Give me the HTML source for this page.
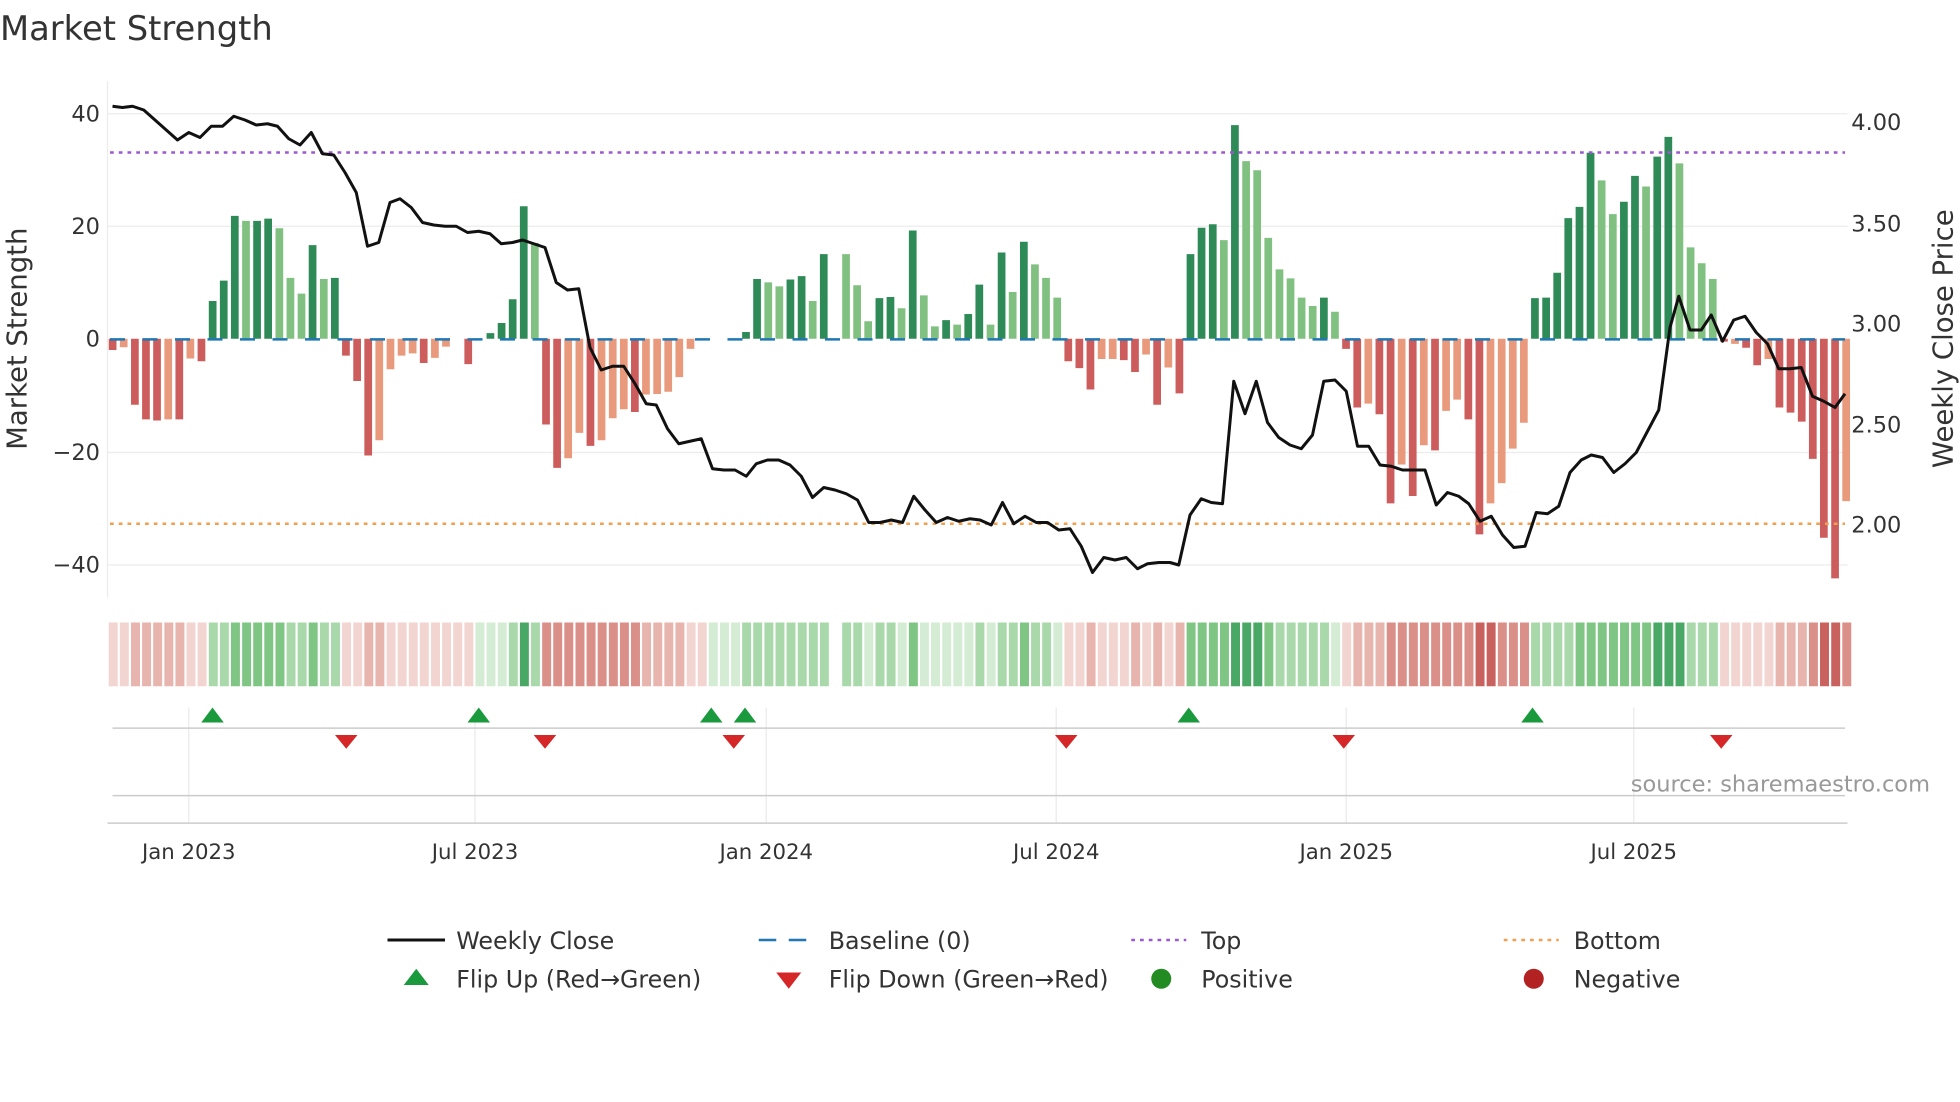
<!DOCTYPE html>
<html><head><meta charset="utf-8"><style>
html,body{margin:0;padding:0;background:#fff;}
svg{display:block;font-family:"DejaVu Sans","Liberation Sans",sans-serif;}
.g{fill:#2e8b57}.l{fill:#80c080}.r{fill:#cd5c5c}.s{fill:#e99a7c}
.a1{fill:#d3ecd3}.a2{fill:#a9d9aa}.a3{fill:#7fc584}.a4{fill:#4aa866}
.b1{fill:#f2d5d1}.b2{fill:#e8b4ae}.b3{fill:#db8f89}.b4{fill:#c9625e}
</style></head><body>
<svg width="1960" height="1102" viewBox="0 0 1568 881.6" xmlns="http://www.w3.org/2000/svg">
<rect width="1568" height="882" fill="#fff"/>
<text x="0" y="32" font-size="27" fill="#333">Market Strength</text>
<g stroke="#ececec" stroke-width="1">
<line x1="86" y1="91" x2="1478" y2="91"/><line x1="86" y1="181" x2="1478" y2="181"/>
<line x1="86" y1="362" x2="1478" y2="362"/><line x1="86" y1="452" x2="1478" y2="452"/>
<line x1="86" y1="65" x2="86" y2="478"/>
</g>
<g font-size="18" fill="#333" text-anchor="end">
<text x="80" y="97">40</text><text x="80" y="187">20</text><text x="80" y="277">0</text>
<text x="80" y="368">−20</text><text x="80" y="458">−40</text>
</g>
<g font-size="18" fill="#333">
<text x="1481" y="104">4.00</text><text x="1481" y="185">3.50</text><text x="1481" y="265">3.00</text>
<text x="1481" y="346">2.50</text><text x="1481" y="426">2.00</text>
</g>
<text transform="translate(21,271) rotate(-90)" font-size="22" fill="#333" text-anchor="middle">Market Strength</text>
<text transform="translate(1562,271) rotate(-90)" font-size="22" fill="#333" text-anchor="middle">Weekly Close Price</text>
<g transform="translate(87,0) scale(0.9955,1) translate(-87,0)">
<rect x="87.0" y="271" width="6.2" height="9.0" class="r"/>
<rect x="95.9" y="271" width="6.2" height="6.8" class="s"/>
<rect x="104.9" y="271" width="6.2" height="52.8" class="r"/>
<rect x="113.8" y="271" width="6.2" height="64.5" class="r"/>
<rect x="122.7" y="271" width="6.2" height="65.4" class="r"/>
<rect x="131.7" y="271" width="6.2" height="64.5" class="s"/>
<rect x="140.6" y="271" width="6.2" height="64.5" class="r"/>
<rect x="149.5" y="271" width="6.2" height="15.8" class="s"/>
<rect x="158.4" y="271" width="6.2" height="18.0" class="r"/>
<rect x="167.4" y="240.8" width="6.2" height="30.2" class="g"/>
<rect x="176.3" y="224.5" width="6.2" height="46.5" class="g"/>
<rect x="185.2" y="172.7" width="6.2" height="98.3" class="g"/>
<rect x="194.2" y="176.7" width="6.2" height="94.3" class="l"/>
<rect x="203.1" y="176.7" width="6.2" height="94.3" class="g"/>
<rect x="212.0" y="174.9" width="6.2" height="96.1" class="g"/>
<rect x="221.0" y="182.6" width="6.2" height="88.4" class="l"/>
<rect x="229.9" y="222.3" width="6.2" height="48.7" class="l"/>
<rect x="238.8" y="234.9" width="6.2" height="36.1" class="l"/>
<rect x="247.7" y="196.1" width="6.2" height="74.9" class="g"/>
<rect x="256.7" y="223.2" width="6.2" height="47.8" class="l"/>
<rect x="265.6" y="222.3" width="6.2" height="48.7" class="g"/>
<rect x="274.5" y="271" width="6.2" height="13.5" class="r"/>
<rect x="283.5" y="271" width="6.2" height="33.8" class="r"/>
<rect x="292.4" y="271" width="6.2" height="93.4" class="r"/>
<rect x="301.3" y="271" width="6.2" height="81.2" class="s"/>
<rect x="310.3" y="271" width="6.2" height="24.4" class="s"/>
<rect x="319.2" y="271" width="6.2" height="13.5" class="s"/>
<rect x="328.1" y="271" width="6.2" height="11.7" class="s"/>
<rect x="337.0" y="271" width="6.2" height="19.4" class="r"/>
<rect x="346.0" y="271" width="6.2" height="15.3" class="s"/>
<rect x="354.9" y="271" width="6.2" height="6.3" class="s"/>
<rect x="372.8" y="271" width="6.2" height="20.3" class="r"/>
<rect x="390.6" y="266.5" width="6.2" height="4.5" class="g"/>
<rect x="399.6" y="258.4" width="6.2" height="12.6" class="g"/>
<rect x="408.5" y="239.4" width="6.2" height="31.6" class="g"/>
<rect x="417.4" y="165" width="6.2" height="106" class="g"/>
<rect x="426.3" y="194.3" width="6.2" height="76.7" class="l"/>
<rect x="435.3" y="271" width="6.2" height="68.6" class="r"/>
<rect x="444.2" y="271" width="6.2" height="103.3" class="r"/>
<rect x="453.1" y="271" width="6.2" height="95.6" class="s"/>
<rect x="462.1" y="271" width="6.2" height="75.3" class="s"/>
<rect x="471.0" y="271" width="6.2" height="85.7" class="r"/>
<rect x="479.9" y="271" width="6.2" height="81.2" class="s"/>
<rect x="488.9" y="271" width="6.2" height="63.6" class="s"/>
<rect x="497.8" y="271" width="6.2" height="56.4" class="s"/>
<rect x="506.7" y="271" width="6.2" height="58.6" class="r"/>
<rect x="515.6" y="271" width="6.2" height="44.6" class="s"/>
<rect x="524.6" y="271" width="6.2" height="44.2" class="s"/>
<rect x="533.5" y="271" width="6.2" height="42.4" class="s"/>
<rect x="542.4" y="271" width="6.2" height="30.7" class="s"/>
<rect x="551.4" y="271" width="6.2" height="8.1" class="s"/>
<rect x="596.0" y="265.6" width="6.2" height="5.4" class="g"/>
<rect x="604.9" y="223.2" width="6.2" height="47.8" class="g"/>
<rect x="613.9" y="225.9" width="6.2" height="45.1" class="l"/>
<rect x="622.8" y="229.1" width="6.2" height="41.9" class="l"/>
<rect x="631.7" y="223.6" width="6.2" height="47.4" class="g"/>
<rect x="640.7" y="220.9" width="6.2" height="50.1" class="g"/>
<rect x="649.6" y="240.8" width="6.2" height="30.2" class="l"/>
<rect x="658.5" y="203.3" width="6.2" height="67.7" class="g"/>
<rect x="676.4" y="203.3" width="6.2" height="67.7" class="l"/>
<rect x="685.3" y="228.2" width="6.2" height="42.8" class="l"/>
<rect x="694.2" y="257" width="6.2" height="14" class="l"/>
<rect x="703.2" y="238.5" width="6.2" height="32.5" class="g"/>
<rect x="712.1" y="237.6" width="6.2" height="33.4" class="g"/>
<rect x="721.0" y="246.6" width="6.2" height="24.4" class="l"/>
<rect x="730.0" y="184.4" width="6.2" height="86.6" class="g"/>
<rect x="738.9" y="236.3" width="6.2" height="34.7" class="l"/>
<rect x="747.8" y="261.1" width="6.2" height="9.9" class="l"/>
<rect x="756.8" y="256.1" width="6.2" height="14.9" class="g"/>
<rect x="765.7" y="259.7" width="6.2" height="11.3" class="l"/>
<rect x="774.6" y="251.2" width="6.2" height="19.8" class="g"/>
<rect x="783.5" y="227.7" width="6.2" height="43.3" class="g"/>
<rect x="792.5" y="259.7" width="6.2" height="11.3" class="l"/>
<rect x="801.4" y="202" width="6.2" height="69" class="g"/>
<rect x="810.3" y="233.6" width="6.2" height="37.4" class="l"/>
<rect x="819.3" y="193.4" width="6.2" height="77.6" class="g"/>
<rect x="828.2" y="211.5" width="6.2" height="59.5" class="l"/>
<rect x="837.1" y="222.3" width="6.2" height="48.7" class="l"/>
<rect x="846.1" y="238.1" width="6.2" height="32.9" class="l"/>
<rect x="855.0" y="271" width="6.2" height="18.0" class="r"/>
<rect x="863.9" y="271" width="6.2" height="23.5" class="r"/>
<rect x="872.8" y="271" width="6.2" height="40.6" class="r"/>
<rect x="881.8" y="271" width="6.2" height="16.2" class="s"/>
<rect x="890.7" y="271" width="6.2" height="16.2" class="s"/>
<rect x="899.6" y="271" width="6.2" height="17.1" class="r"/>
<rect x="908.6" y="271" width="6.2" height="26.6" class="r"/>
<rect x="917.5" y="271" width="6.2" height="12.6" class="s"/>
<rect x="926.4" y="271" width="6.2" height="52.8" class="r"/>
<rect x="935.4" y="271" width="6.2" height="23.0" class="s"/>
<rect x="944.3" y="271" width="6.2" height="43.7" class="r"/>
<rect x="953.2" y="203.3" width="6.2" height="67.7" class="g"/>
<rect x="962.1" y="182.2" width="6.2" height="88.8" class="g"/>
<rect x="971.1" y="179.4" width="6.2" height="91.6" class="g"/>
<rect x="980.0" y="192.1" width="6.2" height="78.9" class="l"/>
<rect x="988.9" y="100.1" width="6.2" height="170.9" class="g"/>
<rect x="997.9" y="128.9" width="6.2" height="142.1" class="l"/>
<rect x="1006.8" y="136.2" width="6.2" height="134.8" class="l"/>
<rect x="1015.7" y="190.3" width="6.2" height="80.7" class="l"/>
<rect x="1024.7" y="215.5" width="6.2" height="55.5" class="l"/>
<rect x="1033.6" y="222.7" width="6.2" height="48.3" class="l"/>
<rect x="1042.5" y="238.1" width="6.2" height="32.9" class="l"/>
<rect x="1051.4" y="244.8" width="6.2" height="26.2" class="l"/>
<rect x="1060.4" y="238.1" width="6.2" height="32.9" class="g"/>
<rect x="1069.3" y="249.4" width="6.2" height="21.6" class="l"/>
<rect x="1078.2" y="271" width="6.2" height="8.1" class="r"/>
<rect x="1087.2" y="271" width="6.2" height="55.0" class="r"/>
<rect x="1096.1" y="271" width="6.2" height="51.9" class="s"/>
<rect x="1105.0" y="271" width="6.2" height="60.4" class="r"/>
<rect x="1114.0" y="271" width="6.2" height="131.7" class="r"/>
<rect x="1122.9" y="271" width="6.2" height="100.6" class="s"/>
<rect x="1131.8" y="271" width="6.2" height="125.8" class="r"/>
<rect x="1140.7" y="271" width="6.2" height="85.2" class="s"/>
<rect x="1149.7" y="271" width="6.2" height="89.3" class="r"/>
<rect x="1158.6" y="271" width="6.2" height="57.7" class="s"/>
<rect x="1167.5" y="271" width="6.2" height="48.7" class="s"/>
<rect x="1176.5" y="271" width="6.2" height="64.5" class="r"/>
<rect x="1185.4" y="271" width="6.2" height="156.5" class="r"/>
<rect x="1194.3" y="271" width="6.2" height="131.7" class="s"/>
<rect x="1203.3" y="271" width="6.2" height="115.5" class="s"/>
<rect x="1212.2" y="271" width="6.2" height="87.9" class="s"/>
<rect x="1221.1" y="271" width="6.2" height="67.2" class="s"/>
<rect x="1230.0" y="238.5" width="6.2" height="32.5" class="g"/>
<rect x="1239.0" y="238.1" width="6.2" height="32.9" class="g"/>
<rect x="1247.9" y="218.2" width="6.2" height="52.8" class="g"/>
<rect x="1256.8" y="174.5" width="6.2" height="96.5" class="g"/>
<rect x="1265.8" y="165.5" width="6.2" height="105.5" class="g"/>
<rect x="1274.7" y="122.2" width="6.2" height="148.8" class="g"/>
<rect x="1283.6" y="144.3" width="6.2" height="126.7" class="l"/>
<rect x="1292.6" y="171.3" width="6.2" height="99.7" class="l"/>
<rect x="1301.5" y="161.4" width="6.2" height="109.6" class="g"/>
<rect x="1310.4" y="140.7" width="6.2" height="130.3" class="g"/>
<rect x="1319.3" y="149.2" width="6.2" height="121.8" class="l"/>
<rect x="1328.3" y="125.3" width="6.2" height="145.7" class="g"/>
<rect x="1337.2" y="109.5" width="6.2" height="161.5" class="g"/>
<rect x="1346.1" y="130.7" width="6.2" height="140.3" class="l"/>
<rect x="1355.1" y="197.9" width="6.2" height="73.1" class="l"/>
<rect x="1364.0" y="210.6" width="6.2" height="60.4" class="l"/>
<rect x="1372.9" y="223.2" width="6.2" height="47.8" class="l"/>
<rect x="1381.9" y="271" width="6.2" height="2.3" class="r"/>
<rect x="1390.8" y="271" width="6.2" height="4.1" class="s"/>
<rect x="1399.7" y="271" width="6.2" height="7.2" class="r"/>
<rect x="1408.6" y="271" width="6.2" height="21.2" class="r"/>
<rect x="1417.6" y="271" width="6.2" height="16.2" class="s"/>
<rect x="1426.5" y="271" width="6.2" height="55.0" class="r"/>
<rect x="1435.4" y="271" width="6.2" height="59.1" class="r"/>
<rect x="1444.4" y="271" width="6.2" height="66.3" class="r"/>
<rect x="1453.3" y="271" width="6.2" height="96.1" class="r"/>
<rect x="1462.2" y="271" width="6.2" height="159.2" class="r"/>
<rect x="1471.2" y="271" width="6.2" height="191.7" class="r"/>
<rect x="1480.1" y="271" width="6.2" height="129.9" class="s"/>
</g>
<g transform="translate(87,0) scale(0.9955,1) translate(-87,0)">
<rect x="87.0" y="498" width="7.2" height="51" class="b1"/>
<rect x="95.9" y="498" width="7.2" height="51" class="b1"/>
<rect x="104.9" y="498" width="7.2" height="51" class="b2"/>
<rect x="113.8" y="498" width="7.2" height="51" class="b2"/>
<rect x="122.7" y="498" width="7.2" height="51" class="b2"/>
<rect x="131.7" y="498" width="7.2" height="51" class="b2"/>
<rect x="140.6" y="498" width="7.2" height="51" class="b2"/>
<rect x="149.5" y="498" width="7.2" height="51" class="b1"/>
<rect x="158.4" y="498" width="7.2" height="51" class="b1"/>
<rect x="167.4" y="498" width="7.2" height="51" class="a2"/>
<rect x="176.3" y="498" width="7.2" height="51" class="a2"/>
<rect x="185.2" y="498" width="7.2" height="51" class="a3"/>
<rect x="194.2" y="498" width="7.2" height="51" class="a3"/>
<rect x="203.1" y="498" width="7.2" height="51" class="a3"/>
<rect x="212.0" y="498" width="7.2" height="51" class="a3"/>
<rect x="221.0" y="498" width="7.2" height="51" class="a3"/>
<rect x="229.9" y="498" width="7.2" height="51" class="a2"/>
<rect x="238.8" y="498" width="7.2" height="51" class="a2"/>
<rect x="247.7" y="498" width="7.2" height="51" class="a3"/>
<rect x="256.7" y="498" width="7.2" height="51" class="a2"/>
<rect x="265.6" y="498" width="7.2" height="51" class="a2"/>
<rect x="274.5" y="498" width="7.2" height="51" class="b1"/>
<rect x="283.5" y="498" width="7.2" height="51" class="b1"/>
<rect x="292.4" y="498" width="7.2" height="51" class="b2"/>
<rect x="301.3" y="498" width="7.2" height="51" class="b2"/>
<rect x="310.3" y="498" width="7.2" height="51" class="b1"/>
<rect x="319.2" y="498" width="7.2" height="51" class="b1"/>
<rect x="328.1" y="498" width="7.2" height="51" class="b1"/>
<rect x="337.0" y="498" width="7.2" height="51" class="b1"/>
<rect x="346.0" y="498" width="7.2" height="51" class="b1"/>
<rect x="354.9" y="498" width="7.2" height="51" class="b1"/>
<rect x="363.8" y="498" width="7.2" height="51" class="b1"/>
<rect x="372.8" y="498" width="7.2" height="51" class="b1"/>
<rect x="381.7" y="498" width="7.2" height="51" class="a1"/>
<rect x="390.6" y="498" width="7.2" height="51" class="a1"/>
<rect x="399.6" y="498" width="7.2" height="51" class="a1"/>
<rect x="408.5" y="498" width="7.2" height="51" class="a2"/>
<rect x="417.4" y="498" width="7.2" height="51" class="a4"/>
<rect x="426.3" y="498" width="7.2" height="51" class="a2"/>
<rect x="435.3" y="498" width="7.2" height="51" class="b3"/>
<rect x="444.2" y="498" width="7.2" height="51" class="b3"/>
<rect x="453.1" y="498" width="7.2" height="51" class="b3"/>
<rect x="462.1" y="498" width="7.2" height="51" class="b3"/>
<rect x="471.0" y="498" width="7.2" height="51" class="b3"/>
<rect x="479.9" y="498" width="7.2" height="51" class="b3"/>
<rect x="488.9" y="498" width="7.2" height="51" class="b3"/>
<rect x="497.8" y="498" width="7.2" height="51" class="b3"/>
<rect x="506.7" y="498" width="7.2" height="51" class="b3"/>
<rect x="515.6" y="498" width="7.2" height="51" class="b2"/>
<rect x="524.6" y="498" width="7.2" height="51" class="b2"/>
<rect x="533.5" y="498" width="7.2" height="51" class="b2"/>
<rect x="542.4" y="498" width="7.2" height="51" class="b2"/>
<rect x="551.4" y="498" width="7.2" height="51" class="b1"/>
<rect x="560.3" y="498" width="7.2" height="51" class="b1"/>
<rect x="569.2" y="498" width="7.2" height="51" class="a1"/>
<rect x="578.2" y="498" width="7.2" height="51" class="a1"/>
<rect x="587.1" y="498" width="7.2" height="51" class="a1"/>
<rect x="596.0" y="498" width="7.2" height="51" class="a2"/>
<rect x="604.9" y="498" width="7.2" height="51" class="a2"/>
<rect x="613.9" y="498" width="7.2" height="51" class="a2"/>
<rect x="622.8" y="498" width="7.2" height="51" class="a2"/>
<rect x="631.7" y="498" width="7.2" height="51" class="a2"/>
<rect x="640.7" y="498" width="7.2" height="51" class="a2"/>
<rect x="649.6" y="498" width="7.2" height="51" class="a2"/>
<rect x="658.5" y="498" width="7.2" height="51" class="a2"/>
<rect x="676.4" y="498" width="7.2" height="51" class="a2"/>
<rect x="685.3" y="498" width="7.2" height="51" class="a2"/>
<rect x="694.2" y="498" width="7.2" height="51" class="a1"/>
<rect x="703.2" y="498" width="7.2" height="51" class="a2"/>
<rect x="712.1" y="498" width="7.2" height="51" class="a2"/>
<rect x="721.0" y="498" width="7.2" height="51" class="a1"/>
<rect x="730.0" y="498" width="7.2" height="51" class="a3"/>
<rect x="738.9" y="498" width="7.2" height="51" class="a1"/>
<rect x="747.8" y="498" width="7.2" height="51" class="a1"/>
<rect x="756.8" y="498" width="7.2" height="51" class="a1"/>
<rect x="765.7" y="498" width="7.2" height="51" class="a1"/>
<rect x="774.6" y="498" width="7.2" height="51" class="a1"/>
<rect x="783.5" y="498" width="7.2" height="51" class="a2"/>
<rect x="792.5" y="498" width="7.2" height="51" class="a1"/>
<rect x="801.4" y="498" width="7.2" height="51" class="a2"/>
<rect x="810.3" y="498" width="7.2" height="51" class="a2"/>
<rect x="819.3" y="498" width="7.2" height="51" class="a3"/>
<rect x="828.2" y="498" width="7.2" height="51" class="a2"/>
<rect x="837.1" y="498" width="7.2" height="51" class="a2"/>
<rect x="846.1" y="498" width="7.2" height="51" class="a1"/>
<rect x="855.0" y="498" width="7.2" height="51" class="b1"/>
<rect x="863.9" y="498" width="7.2" height="51" class="b1"/>
<rect x="872.8" y="498" width="7.2" height="51" class="b2"/>
<rect x="881.8" y="498" width="7.2" height="51" class="b1"/>
<rect x="890.7" y="498" width="7.2" height="51" class="b1"/>
<rect x="899.6" y="498" width="7.2" height="51" class="b1"/>
<rect x="908.6" y="498" width="7.2" height="51" class="b2"/>
<rect x="917.5" y="498" width="7.2" height="51" class="b1"/>
<rect x="926.4" y="498" width="7.2" height="51" class="b2"/>
<rect x="935.4" y="498" width="7.2" height="51" class="b1"/>
<rect x="944.3" y="498" width="7.2" height="51" class="b2"/>
<rect x="953.2" y="498" width="7.2" height="51" class="a3"/>
<rect x="962.1" y="498" width="7.2" height="51" class="a3"/>
<rect x="971.1" y="498" width="7.2" height="51" class="a3"/>
<rect x="980.0" y="498" width="7.2" height="51" class="a3"/>
<rect x="988.9" y="498" width="7.2" height="51" class="a4"/>
<rect x="997.9" y="498" width="7.2" height="51" class="a4"/>
<rect x="1006.8" y="498" width="7.2" height="51" class="a4"/>
<rect x="1015.7" y="498" width="7.2" height="51" class="a3"/>
<rect x="1024.7" y="498" width="7.2" height="51" class="a2"/>
<rect x="1033.6" y="498" width="7.2" height="51" class="a2"/>
<rect x="1042.5" y="498" width="7.2" height="51" class="a2"/>
<rect x="1051.4" y="498" width="7.2" height="51" class="a2"/>
<rect x="1060.4" y="498" width="7.2" height="51" class="a2"/>
<rect x="1069.3" y="498" width="7.2" height="51" class="a1"/>
<rect x="1078.2" y="498" width="7.2" height="51" class="b1"/>
<rect x="1087.2" y="498" width="7.2" height="51" class="b2"/>
<rect x="1096.1" y="498" width="7.2" height="51" class="b2"/>
<rect x="1105.0" y="498" width="7.2" height="51" class="b2"/>
<rect x="1114.0" y="498" width="7.2" height="51" class="b3"/>
<rect x="1122.9" y="498" width="7.2" height="51" class="b3"/>
<rect x="1131.8" y="498" width="7.2" height="51" class="b3"/>
<rect x="1140.7" y="498" width="7.2" height="51" class="b3"/>
<rect x="1149.7" y="498" width="7.2" height="51" class="b3"/>
<rect x="1158.6" y="498" width="7.2" height="51" class="b3"/>
<rect x="1167.5" y="498" width="7.2" height="51" class="b3"/>
<rect x="1176.5" y="498" width="7.2" height="51" class="b3"/>
<rect x="1185.4" y="498" width="7.2" height="51" class="b4"/>
<rect x="1194.3" y="498" width="7.2" height="51" class="b4"/>
<rect x="1203.3" y="498" width="7.2" height="51" class="b3"/>
<rect x="1212.2" y="498" width="7.2" height="51" class="b3"/>
<rect x="1221.1" y="498" width="7.2" height="51" class="b3"/>
<rect x="1230.0" y="498" width="7.2" height="51" class="a2"/>
<rect x="1239.0" y="498" width="7.2" height="51" class="a2"/>
<rect x="1247.9" y="498" width="7.2" height="51" class="a2"/>
<rect x="1256.8" y="498" width="7.2" height="51" class="a2"/>
<rect x="1265.8" y="498" width="7.2" height="51" class="a3"/>
<rect x="1274.7" y="498" width="7.2" height="51" class="a3"/>
<rect x="1283.6" y="498" width="7.2" height="51" class="a3"/>
<rect x="1292.6" y="498" width="7.2" height="51" class="a3"/>
<rect x="1301.5" y="498" width="7.2" height="51" class="a3"/>
<rect x="1310.4" y="498" width="7.2" height="51" class="a3"/>
<rect x="1319.3" y="498" width="7.2" height="51" class="a3"/>
<rect x="1328.3" y="498" width="7.2" height="51" class="a4"/>
<rect x="1337.2" y="498" width="7.2" height="51" class="a4"/>
<rect x="1346.1" y="498" width="7.2" height="51" class="a4"/>
<rect x="1355.1" y="498" width="7.2" height="51" class="a2"/>
<rect x="1364.0" y="498" width="7.2" height="51" class="a2"/>
<rect x="1372.9" y="498" width="7.2" height="51" class="a2"/>
<rect x="1381.9" y="498" width="7.2" height="51" class="b1"/>
<rect x="1390.8" y="498" width="7.2" height="51" class="b1"/>
<rect x="1399.7" y="498" width="7.2" height="51" class="b1"/>
<rect x="1408.6" y="498" width="7.2" height="51" class="b1"/>
<rect x="1417.6" y="498" width="7.2" height="51" class="b1"/>
<rect x="1426.5" y="498" width="7.2" height="51" class="b2"/>
<rect x="1435.4" y="498" width="7.2" height="51" class="b2"/>
<rect x="1444.4" y="498" width="7.2" height="51" class="b2"/>
<rect x="1453.3" y="498" width="7.2" height="51" class="b3"/>
<rect x="1462.2" y="498" width="7.2" height="51" class="b4"/>
<rect x="1471.2" y="498" width="7.2" height="51" class="b4"/>
<rect x="1480.1" y="498" width="7.2" height="51" class="b3"/>
</g>
<line x1="88" y1="271.5" x2="1476" y2="271.5" stroke="#1f77b4" stroke-width="2" stroke-dasharray="12,14"/>
<line x1="88" y1="122" x2="1476" y2="122" stroke="#9b59d0" stroke-width="2" stroke-dasharray="3,4"/>
<line x1="88" y1="419" x2="1476" y2="419" stroke="#f0a050" stroke-width="2" stroke-dasharray="3,4"/>
<polyline fill="none" stroke="#111" stroke-width="2.4" stroke-linejoin="round" points="90,85 98,86 106,85 115,88 124,96 133,104 142,112 151,106 160,110 169,101 178,101 187,93 196,96 205,100 214,99 222,101 231,111 240,116 249,106 258,123 267,124 276,138 285,154 294,197 303,194 312,162 320,159 329,166 338,178 347,180 356,181 365,181 374,186 383,185 392,187 401,195 410,194 418,192 427,195 436,198 445,226 454,232 463,231 472,278 481,296 490,293 499,293 508,307 517,323 525,324 534,343 543,355 552,353 561,351 570,375 579,376 588,376 597,381 605,371 614,368 623,368 632,372 641,381 650,398 659,390 668,392 677,395 686,400 695,418 704,418 713,416 722,418 731,397 740,408 749,418 758,414 767,417 776,415 784,416 793,420 802,402 811,419 820,413 829,418 838,418 847,424 856,423 865,437 874,458 883,446 892,448 901,446 910,455 918,451 927,450 936,450 943,452 952,412 961,399 969,402 978,403 987,305 996,331 1005,305 1014,338 1023,350 1032,356 1041,359 1050,348 1059,305 1068,304 1077,313 1086,357 1095,357 1104,372 1113,373 1122,376 1131,376 1140,376 1149,404 1158,394 1167,397 1175,403 1184,417 1193,413 1202,428 1211,438 1220,437 1229,410 1238,411 1247,405 1256,378 1265,368 1273,364 1282,366 1291,378 1300,371 1309,362 1318,345 1327,328 1336,262 1343,237 1352,264 1361,264 1369,252 1378,273 1387,256 1396,253 1405,266 1414,275 1423,295 1432,295 1441,294 1450,317 1459,321 1468,326 1476,315"/>
<g stroke="#eee" stroke-width="1.2">
<line x1="151" y1="566" x2="151" y2="658"/><line x1="380" y1="566" x2="380" y2="658"/>
<line x1="613" y1="566" x2="613" y2="658"/><line x1="845" y1="566" x2="845" y2="658"/>
<line x1="1077" y1="566" x2="1077" y2="658"/><line x1="1307" y1="566" x2="1307" y2="658"/>
</g>
<line x1="90" y1="582.5" x2="1476" y2="582.5" stroke="#ccc" stroke-width="1.2"/>
<line x1="90" y1="636.5" x2="1476" y2="636.5" stroke="#ccc" stroke-width="1.2"/>
<line x1="86" y1="658.5" x2="1478" y2="658.5" stroke="#ccc" stroke-width="1.2"/>
<g fill="#1a9a3c">
<polygon points="161,578 179,578 170,566"/><polygon points="374,578 392,578 383,566"/>
<polygon points="560,578 578,578 569,566"/><polygon points="587,578 605,578 596,566"/>
<polygon points="942,578 960,578 951,566"/><polygon points="1217,578 1235,578 1226,566"/>
</g>
<g fill="#d62728">
<polygon points="268,588 286,588 277,599"/><polygon points="427,588 445,588 436,599"/>
<polygon points="578,588 596,588 587,599"/><polygon points="844,588 862,588 853,599"/>
<polygon points="1066,588 1084,588 1075,599"/><polygon points="1368,588 1386,588 1377,599"/>
</g>
<text x="1544" y="633" font-size="18" fill="#999" text-anchor="end">source: sharemaestro.com</text>
<g font-size="17" fill="#333" text-anchor="middle">
<text x="151" y="687">Jan 2023</text><text x="380" y="687">Jul 2023</text><text x="613" y="687">Jan 2024</text>
<text x="845" y="687">Jul 2024</text><text x="1077" y="687">Jan 2025</text><text x="1307" y="687">Jul 2025</text>
</g>
<g font-size="19" fill="#333">
<line x1="310" y1="752" x2="356" y2="752" stroke="#111" stroke-width="2.4"/>
<text x="365" y="759">Weekly Close</text>
<line x1="607" y1="752" x2="651" y2="752" stroke="#1f77b4" stroke-width="2" stroke-dasharray="14,10"/>
<text x="663" y="759">Baseline (0)</text>
<line x1="905" y1="752" x2="949" y2="752" stroke="#9b59d0" stroke-width="2" stroke-dasharray="3,4"/>
<text x="961" y="759">Top</text>
<line x1="1203" y1="752" x2="1247" y2="752" stroke="#f0a050" stroke-width="2" stroke-dasharray="3,4"/>
<text x="1259" y="759">Bottom</text>
<polygon points="323,788 343,788 333,775" fill="#1a9a3c"/>
<text x="365" y="790">Flip Up (Red→Green)</text>
<polygon points="621,778 641,778 631,791" fill="#d62728"/>
<text x="663" y="790">Flip Down (Green→Red)</text>
<circle cx="929" cy="783" r="8" fill="#228b22"/>
<text x="961" y="790">Positive</text>
<circle cx="1227" cy="783" r="8" fill="#b22222"/>
<text x="1259" y="790">Negative</text>
</g>
</svg>
</body></html>
